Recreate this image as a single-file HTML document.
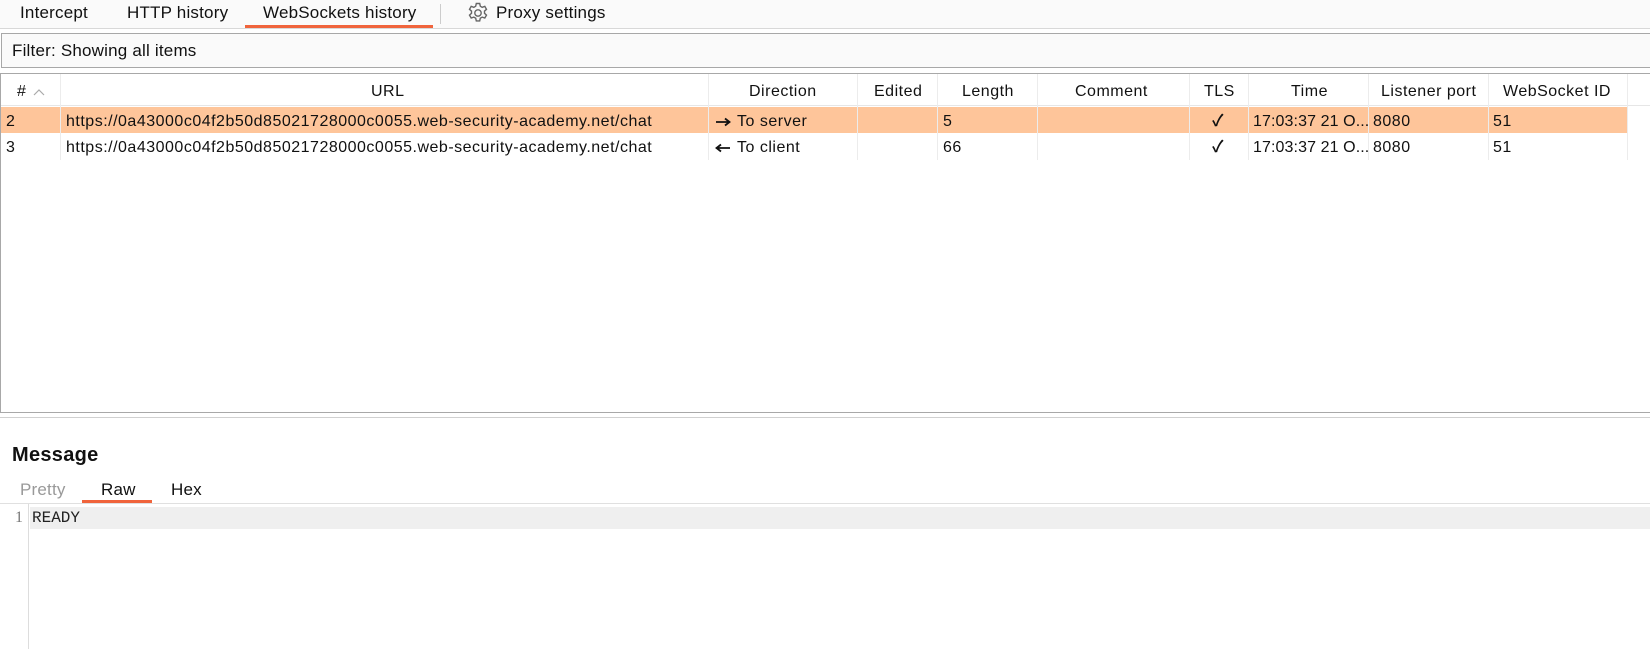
<!DOCTYPE html>
<html><head><meta charset="utf-8"><style>
*{box-sizing:border-box;margin:0;padding:0}
body{width:1650px;height:649px;background:#fff;font-family:"Liberation Sans","Noto Sans CJK SC",sans-serif;font-size:16px;letter-spacing:0.5px;color:#111;position:relative;overflow:hidden}
.a{position:absolute;white-space:nowrap}
.tabs{position:absolute;left:0;top:0;width:1650px;height:29px;background:#fafafa;border-bottom:1px solid #d8d8d8}
.tabs span{font-size:17px;letter-spacing:0.2px}
.filter{position:absolute;left:1px;top:33px;width:1649px;height:35px;border:1px solid #a8a8a8;border-right:none;background:#fafafa}
.tbl{position:absolute;left:0;top:73px;width:1650px;height:340px;border:1px solid #a8a8a8;border-right:none;background:#fff}
.hdr{position:absolute;top:0;height:32px;background:#fff;border-bottom:1px solid #e6e6e6}
.col{position:absolute;top:0;height:86px;border-right:1px solid #ececec}
.cell{position:absolute;white-space:nowrap;line-height:26px}
.tm{letter-spacing:0.1px}
</style></head><body>
<div class="tabs">
<span class="a" style="left:20px;top:3px">Intercept</span>
<span class="a" style="left:127px;top:3px">HTTP history</span>
<span class="a" style="left:263px;top:3px">WebSockets history</span>
<div class="a" style="left:245px;top:25px;width:188px;height:3px;background:#f0643c"></div>
<div class="a" style="left:440px;top:4px;width:1px;height:20px;background:#ccc"></div>
<svg class="a" style="left:466px;top:1px" width="24" height="24" viewBox="0 0 24 24" fill="none" stroke="#666" stroke-width="1.4"><circle cx="12" cy="12" r="3.2"/><path d="M10.3 2.5h3.4l.6 2.7 1.9 1.1 2.6-.9 1.7 2.9-2 1.8v2.2l2 1.8-1.7 2.9-2.6-.9-1.9 1.1-.6 2.7h-3.4l-.6-2.7-1.9-1.1-2.6.9-1.7-2.9 2-1.8v-2.2l-2-1.8 1.7-2.9 2.6.9 1.9-1.1z"/></svg>
<span class="a" style="left:496px;top:3px">Proxy settings</span>
</div>
<div class="filter"><span class="a" style="left:10px;top:7px;font-size:17px;letter-spacing:0.2px">Filter: Showing all items</span></div>
<div class="tbl">
<div class="hdr" style="left:0;width:1650px"></div>
<div class="a" style="left:0;top:33px;width:1627px;height:26px;background:#fec59a"></div>
<div class="col" style="left:0;width:60px"></div>
<div class="col" style="left:60px;width:648px"></div>
<div class="col" style="left:708px;width:149px"></div>
<div class="col" style="left:857px;width:80px"></div>
<div class="col" style="left:937px;width:100px"></div>
<div class="col" style="left:1037px;width:152px"></div>
<div class="col" style="left:1189px;width:59px"></div>
<div class="col" style="left:1248px;width:120px"></div>
<div class="col" style="left:1368px;width:120px"></div>
<div class="col" style="left:1488px;width:139px"></div>
<span class="cell" style="left:16px;top:5px">#</span>
<svg class="a" style="left:32px;top:14px" width="12" height="8"><path d="M1 7L6 2L11 7" fill="none" stroke="#aaa" stroke-width="1.2"/></svg>
<span class="cell" style="left:370px;top:5px">URL</span>
<span class="cell" style="left:748px;top:5px">Direction</span>
<span class="cell" style="left:873px;top:5px">Edited</span>
<span class="cell" style="left:961px;top:5px">Length</span>
<span class="cell" style="left:1074px;top:5px">Comment</span>
<span class="cell" style="left:1203px;top:5px">TLS</span>
<span class="cell" style="left:1290px;top:5px">Time</span>
<span class="cell" style="left:1380px;top:5px">Listener port</span>
<span class="cell" style="left:1502px;top:5px">WebSocket ID</span>
<span class="cell" style="left:5px;top:35px">2</span>
<span class="cell" style="left:65px;top:35px">https://0a43000c04f2b50d85021728000c0055.web-security-academy.net/chat</span>
<svg class="a" style="left:714px;top:43px" width="16" height="10"><path d="M1 5H14M10 1.5L14.5 5L10 8.5" fill="none" stroke="#111" stroke-width="1.8"/></svg>
<span class="cell" style="left:736px;top:35px">To server</span>
<span class="cell" style="left:942px;top:35px">5</span>
<span class="cell" style="left:1211px;top:35px;font-weight:bold">✓</span>
<span class="cell tm" style="left:1252px;top:35px">17:03:37 21 O...</span>
<span class="cell" style="left:1372px;top:35px">8080</span>
<span class="cell" style="left:1492px;top:35px">51</span>
<span class="cell" style="left:5px;top:61px">3</span>
<span class="cell" style="left:65px;top:61px">https://0a43000c04f2b50d85021728000c0055.web-security-academy.net/chat</span>
<svg class="a" style="left:714px;top:69px" width="16" height="10"><path d="M15 5H2M6 1.5L1.5 5L6 8.5" fill="none" stroke="#111" stroke-width="1.8"/></svg>
<span class="cell" style="left:736px;top:61px">To client</span>
<span class="cell" style="left:942px;top:61px">66</span>
<span class="cell" style="left:1211px;top:61px;font-weight:bold">✓</span>
<span class="cell tm" style="left:1252px;top:61px">17:03:37 21 O...</span>
<span class="cell" style="left:1372px;top:61px">8080</span>
<span class="cell" style="left:1492px;top:61px">51</span>
</div>
<div class="a" style="left:0;top:417px;width:1650px;height:1px;background:#d0d0d0"></div>
<span class="a" style="left:12px;top:444px;font-size:20px;font-weight:bold;letter-spacing:0.3px">Message</span>
<span class="a" style="left:20px;top:480px;font-size:17px;letter-spacing:0.2px;color:#999">Pretty</span>
<span class="a" style="left:101px;top:480px;font-size:17px;letter-spacing:0.2px">Raw</span>
<span class="a" style="left:171px;top:480px;font-size:17px;letter-spacing:0.2px">Hex</span>
<div class="a" style="left:82px;top:500px;width:70px;height:3px;background:#f0643c"></div>
<div class="a" style="left:0;top:503px;width:1650px;height:1px;background:#e0e0e0"></div>
<div class="a" style="left:28px;top:504px;width:1px;height:145px;background:#ddd"></div>
<div class="a" style="left:30px;top:507px;width:1620px;height:22px;background:#efefef"></div>
<span class="a" style="left:15px;top:509px;font-family:'Liberation Serif',serif;font-size:16px;letter-spacing:0;color:#777">1</span>
<span class="a" style="left:32px;top:509px;font-family:'Liberation Mono',monospace;font-size:16px;letter-spacing:0;color:#222">READY</span>
</body></html>
